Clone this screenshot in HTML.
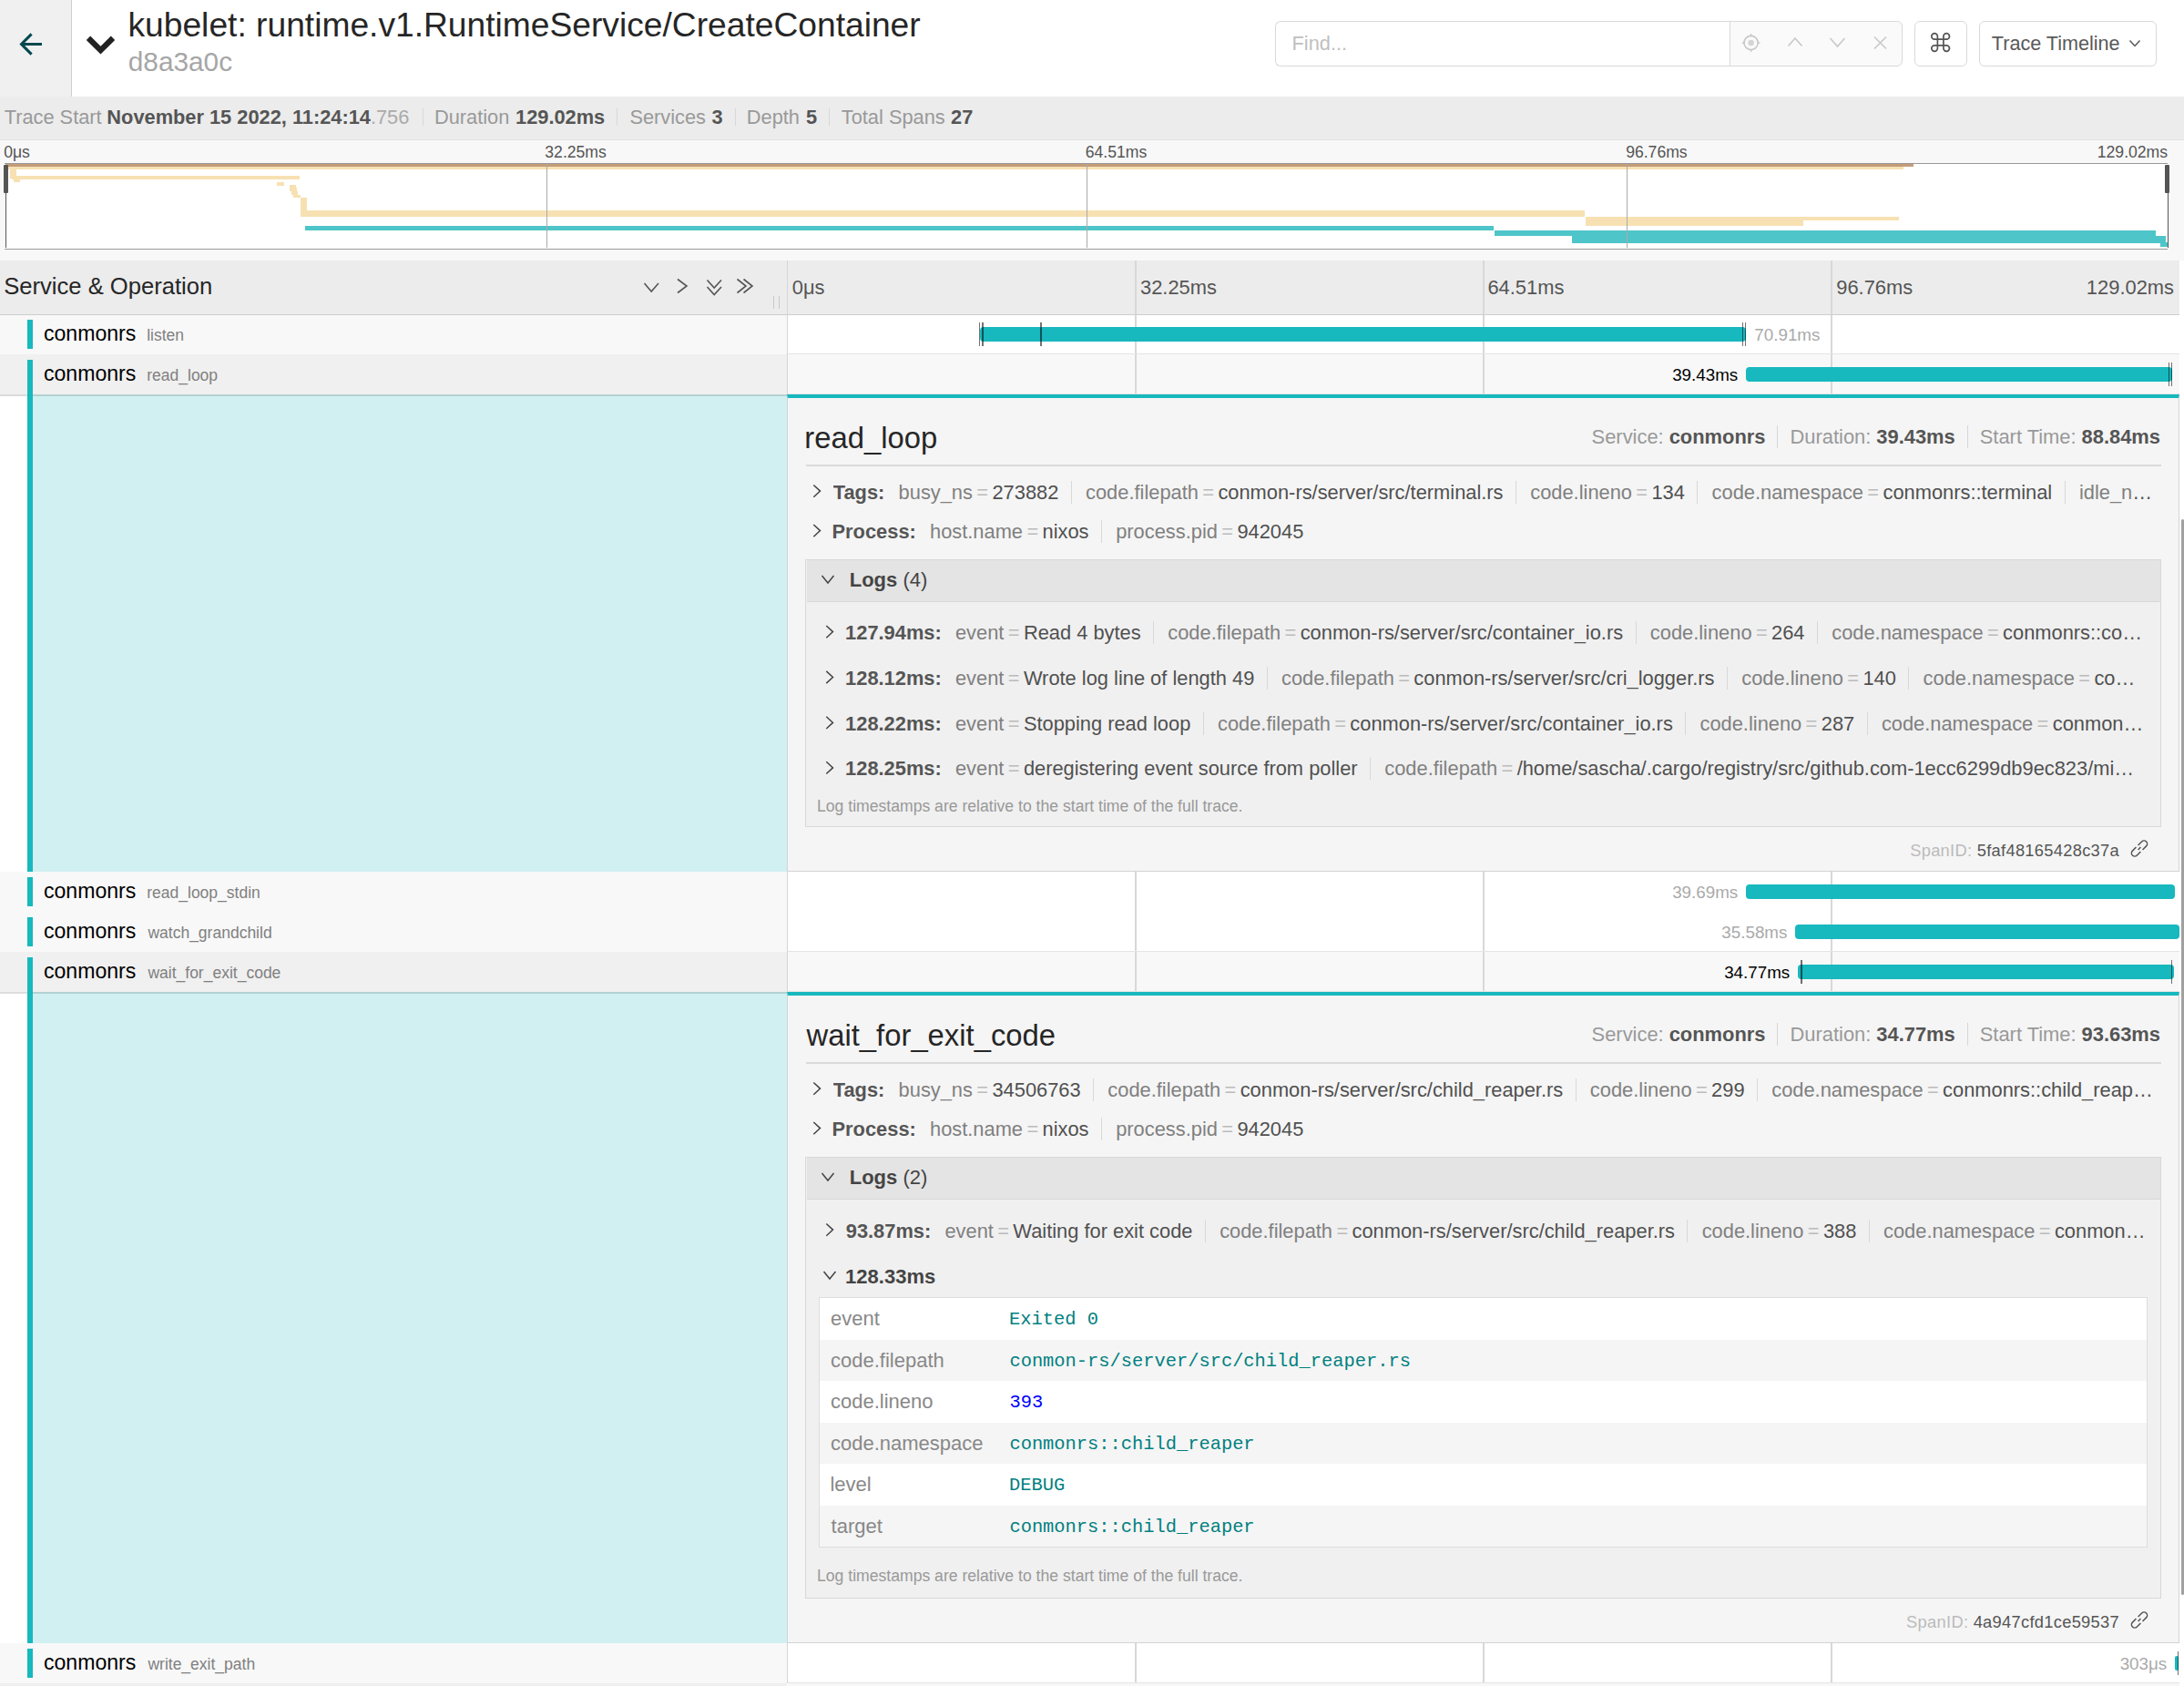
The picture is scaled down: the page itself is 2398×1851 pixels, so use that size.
<!DOCTYPE html><html><head><meta charset="utf-8"><style>
*{box-sizing:content-box}
html,body{margin:0;padding:0;width:2398px;height:1851px;overflow:hidden;background:#fff;font-family:'Liberation Sans',sans-serif}
.a{position:absolute}
.t{position:absolute;white-space:pre;line-height:normal}
.metab{display:flex;align-items:center;font-size:21.7px;white-space:pre;line-height:normal}
.metab .mi{padding-right:13px;margin-right:13px;border-right:1px solid #d6d6d6;color:#555}
.metab .mi.last{border-right:none}
.metab .ml{color:#999}
.metab b{color:#555}
.lh{white-space:pre;line-height:normal}
.lh .li{padding-right:13px;margin-right:13px;border-right:1px solid #d6d6d6}
.lh .li.last{border-right:none;padding-right:0;margin-right:0}
.lh .ll{color:#999;margin-right:6px}
.lh b{color:#555}
.kv{white-space:nowrap;overflow:hidden;text-overflow:ellipsis;font-size:21.85px;line-height:normal;color:#505050}
.kv b.kl{color:#555}
.kv ul{display:inline;list-style:none;margin:0;padding:0}
.kv li{display:inline;margin-left:15.2px;padding-right:13.5px;border-right:1px solid #d8d8d8}
.kv li:last-child{padding-right:0;border-right:none}
.kv .sk{color:#808080}
.kv .sd{color:#bbb;padding:0 0.2em}
</style></head><body><div class="a" style="left:0px;top:0px;width:2398px;height:106px;background:#fff;"></div>
<div class="a" style="left:0px;top:0px;width:78px;height:106px;background:#f0f0f0;border-right:1px solid #d0d0d0;"></div>
<svg class="a" style="left:0;top:0" width="78" height="106"><path d="M34.6 37.4 L23.5 48.5 L34.6 59.6 M23.5 48.5 H46" stroke="#00474e" stroke-width="3" fill="none"/></svg>
<svg class="a" style="left:90px;top:30px" width="40" height="35"><path d="M97 41.7 L110.5 55.2 L124 41.7" transform="translate(-90,-30)" stroke="#222" stroke-width="6.2" fill="none" stroke-linecap="butt"/></svg>
<div class="t" style="left:140.49px;top:6.00px;font-size:37.2px;color:#262626;font-family:'Liberation Sans',sans-serif;">kubelet: runtime.v1.RuntimeService/CreateContainer</div>
<div class="t" style="left:140.75px;top:50.80px;font-size:29.8px;color:#a6a6a6;font-family:'Liberation Sans',sans-serif;">d8a3a0c</div>
<div class="a" style="left:1400px;top:23px;width:499px;height:48px;border:1px solid #d9d9d9;border-right:none;border-radius:6px 0 0 6px;background:#fff"></div>
<div class="t" style="left:1418.51px;top:35.00px;font-size:21.8px;color:#bfbfbf;font-family:'Liberation Sans',sans-serif;">Find...</div>
<div class="a" style="left:1899px;top:23px;width:188px;height:48px;border:1px solid #d9d9d9;border-radius:0 6px 6px 0;background:#fafafa"></div>
<svg class="a" style="left:1900px;top:24px" width="188" height="48">
<g transform="translate(-1900,-24)" stroke="#c8c8c8" fill="none" stroke-width="1.6">
<circle cx="1922.6" cy="47" r="7.6"/><circle cx="1922.6" cy="47" r="3.3" fill="#d5d5d5" stroke="none"/>
<path d="M1922.6 37.2 v2.3 M1922.6 54.5 v2.3 M1912.8 47 h2.3 M1930.2 47 h2.3"/>
<path d="M1963.5 50.5 L1971 42 L1978.5 50.5"/>
<path d="M2009.5 42 L2017.5 51 L2025.5 42"/>
<path d="M2058 40.5 L2071 53.5 M2071 40.5 L2058 53.5"/>
</g></svg>
<div class="a" style="left:2102px;top:23px;width:56px;height:48px;border:1px solid #d9d9d9;border-radius:6px;background:#fff"></div>
<svg class="a" style="left:0;top:0;overflow:visible" width="1" height="1"><path d="M2127.4 53.1 V39.9 A3.3 3.3 0 1 0 2124.1 43.2 H2137.2 A3.3 3.3 0 1 0 2133.9 39.9 V53.1 A3.3 3.3 0 1 0 2137.2 49.8 H2124.1 A3.3 3.3 0 1 0 2127.4 53.1 Z" stroke="#555" stroke-width="1.7" fill="none"/></svg>
<div class="a" style="left:2173px;top:23px;width:193px;height:48px;border:1px solid #d9d9d9;border-radius:6px;background:#fff"></div>
<div class="t" style="left:2186.81px;top:35.20px;font-size:21.6px;color:#595959;font-family:'Liberation Sans',sans-serif;">Trace Timeline</div>
<svg class="a" style="left:2330px;top:38px" width="30" height="20"><path d="M8.5 6.5 L14 12.5 L19.5 6.5" stroke="#595959" stroke-width="1.5" fill="none"/></svg>
<div class="a" style="left:0px;top:106px;width:2398px;height:47px;background:#ececec;"></div>
<div class="a" style="left:0px;top:153px;width:2398px;height:1px;background:#e2e2e2;"></div>
<div class="t" style="left:4.66px;top:116.10px;font-size:21.8px;color:#999;font-family:'Liberation Sans',sans-serif;">Trace Start</div>
<div class="t" style="left:117.34px;top:116.10px;font-size:21.8px;color:#555;font-family:'Liberation Sans',sans-serif;font-weight:bold;">November 15 2022, 11:24:14<span style="color:#aaa;font-weight:normal">.756</span></div>
<div class="a" style="left:464.1px;top:119.3px;width:1.0px;height:19.000000000000014px;background:#d8d8d8;"></div>
<div class="a" style="left:677.4px;top:119.3px;width:1.0px;height:19.000000000000014px;background:#d8d8d8;"></div>
<div class="a" style="left:806.7px;top:119.3px;width:1.0px;height:19.000000000000014px;background:#d8d8d8;"></div>
<div class="a" style="left:910.1px;top:119.3px;width:1.0px;height:19.000000000000014px;background:#d8d8d8;"></div>
<div class="t" style="left:476.91px;top:116.10px;font-size:21.8px;color:#999;font-family:'Liberation Sans',sans-serif;">Duration</div>
<div class="t" style="left:566.03px;top:116.10px;font-size:21.8px;color:#555;font-family:'Liberation Sans',sans-serif;font-weight:bold;">129.02ms</div>
<div class="t" style="left:691.41px;top:116.10px;font-size:21.8px;color:#999;font-family:'Liberation Sans',sans-serif;">Services</div>
<div class="t" style="left:781.40px;top:116.10px;font-size:21.8px;color:#555;font-family:'Liberation Sans',sans-serif;font-weight:bold;">3</div>
<div class="t" style="left:819.81px;top:116.10px;font-size:21.8px;color:#999;font-family:'Liberation Sans',sans-serif;">Depth</div>
<div class="t" style="left:885.03px;top:116.10px;font-size:21.8px;color:#555;font-family:'Liberation Sans',sans-serif;font-weight:bold;">5</div>
<div class="t" style="left:923.81px;top:116.10px;font-size:21.8px;color:#999;font-family:'Liberation Sans',sans-serif;">Total Spans</div>
<div class="t" style="left:1044.04px;top:116.10px;font-size:21.8px;color:#555;font-family:'Liberation Sans',sans-serif;font-weight:bold;">27</div>
<div class="a" style="left:0px;top:154px;width:2398px;height:132px;background:#f8f8f8;"></div>
<div class="t" style="left:4.21px;top:157.00px;font-size:17.6px;color:#555;font-family:'Liberation Sans',sans-serif;">0μs</div>
<div class="t" style="left:598.33px;top:157.00px;font-size:17.6px;color:#555;font-family:'Liberation Sans',sans-serif;">32.25ms</div>
<div class="t" style="left:1191.71px;top:157.00px;font-size:17.6px;color:#555;font-family:'Liberation Sans',sans-serif;">64.51ms</div>
<div class="t" style="left:1785.17px;top:157.00px;font-size:17.6px;color:#555;font-family:'Liberation Sans',sans-serif;">96.76ms</div>
<div class="t" style="right:17.96px;top:157.00px;font-size:17.6px;color:#555;font-family:'Liberation Sans',sans-serif;">129.02ms</div>
<div class="a" style="left:5px;top:179px;width:2375px;height:93px;background:#fff;border-top:1px solid #999;border-bottom:1px solid #999;"></div>
<div class="a" style="left:6px;top:180px;width:2095px;height:2.5px;background:#c49c78;"></div>
<div class="a" style="left:6px;top:182.5px;width:2084px;height:3.5px;background:#f7e1b2;"></div>
<div class="a" style="left:10.5px;top:186px;width:7.5px;height:10px;background:#f7e1b2;"></div>
<div class="a" style="left:13px;top:193px;width:316px;height:3.5px;background:#f7e1b2;"></div>
<div class="a" style="left:15px;top:196px;width:7px;height:3.5px;background:#f7e1b2;"></div>
<div class="a" style="left:304px;top:199.5px;width:8px;height:4.0px;background:#f7e1b2;"></div>
<div class="a" style="left:318px;top:203px;width:7px;height:3px;background:#f7e1b2;"></div>
<div class="a" style="left:318px;top:206px;width:8px;height:4px;background:#f7e1b2;"></div>
<div class="a" style="left:320px;top:210px;width:7px;height:4px;background:#f7e1b2;"></div>
<div class="a" style="left:322px;top:214px;width:8px;height:3px;background:#f7e1b2;"></div>
<div class="a" style="left:330px;top:217px;width:7px;height:14px;background:#f7e1b2;"></div>
<div class="a" style="left:330px;top:231px;width:1410px;height:7px;background:#f7e1b2;"></div>
<div class="a" style="left:1741px;top:238px;width:239px;height:10px;background:#f7e1b2;"></div>
<div class="a" style="left:1980px;top:238px;width:105px;height:3.5px;background:#f7e1b2;"></div>
<div class="a" style="left:335px;top:248px;width:1305px;height:4.5px;background:#4ec5c9;"></div>
<div class="a" style="left:1641px;top:252.5px;width:726px;height:6.5px;background:#4ec5c9;"></div>
<div class="a" style="left:1726px;top:259px;width:652px;height:7.5px;background:#4ec5c9;"></div>
<div class="a" style="left:2372px;top:266px;width:8px;height:5px;background:#4ec5c9;"></div>
<div class="a" style="left:599.5px;top:180px;width:1.5px;height:92px;background:#aaa;"></div>
<div class="a" style="left:1192.5px;top:180px;width:1.5px;height:92px;background:#aaa;"></div>
<div class="a" style="left:1785.5px;top:180px;width:1.5px;height:92px;background:#aaa;"></div>
<div class="a" style="left:4px;top:181px;width:5px;height:31px;background:#555;border-radius:1px;"></div>
<div class="a" style="left:5.5px;top:181px;width:1.5px;height:91px;background:#555;"></div>
<div class="a" style="left:2377px;top:181px;width:5px;height:31px;background:#555;border-radius:1px;"></div>
<div class="a" style="left:2379.5px;top:181px;width:1.5px;height:91px;background:#555;"></div>
<div class="a" style="left:0px;top:286px;width:2393px;height:59px;background:#ececec;"></div>
<div class="a" style="left:0px;top:345px;width:2393px;height:1px;background:#cdcdcd;"></div>
<div class="t" style="left:4.24px;top:299.90px;font-size:25.6px;color:#262626;font-family:'Liberation Sans',sans-serif;">Service &amp; Operation</div>
<svg class="a" style="left:690px;top:290px" width="180" height="55"><g transform="translate(-690,-290)" stroke="#555" stroke-width="1.6" fill="none">
<path d="M707.5 311 L715.2 320 L723 311"/>
<path d="M744 306.5 L754 314 L744 321.5"/>
<path d="M776.5 307.5 L784.2 316 L792 307.5 M776.5 315 L784.2 323.5 L792 315"/>
<path d="M809.5 306.5 L819 314 L809.5 321.5 M816.5 306.5 L826 314 L816.5 321.5"/>
</g>
<path d="M159.5 35 v14 M165.5 35 v14" stroke="#c8c8c8" stroke-width="1" fill="none"/>
</svg>
<div class="a" style="left:864px;top:286px;width:1px;height:60px;background:#d6d6d6;"></div>
<div class="t" style="left:869.84px;top:303.00px;font-size:21.9px;color:#555;font-family:'Liberation Sans',sans-serif;">0μs</div>
<div class="t" style="left:1251.97px;top:303.00px;font-size:21.9px;color:#555;font-family:'Liberation Sans',sans-serif;">32.25ms</div>
<div class="t" style="left:1633.39px;top:303.00px;font-size:21.9px;color:#555;font-family:'Liberation Sans',sans-serif;">64.51ms</div>
<div class="t" style="left:2016.27px;top:303.00px;font-size:21.9px;color:#555;font-family:'Liberation Sans',sans-serif;">96.76ms</div>
<div class="t" style="right:11.01px;top:303.00px;font-size:21.9px;color:#555;font-family:'Liberation Sans',sans-serif;">129.02ms</div>
<div class="a" style="left:1246px;top:286px;width:2px;height:59px;background:#d8d8d8;"></div>
<div class="a" style="left:1628px;top:286px;width:2px;height:59px;background:#d8d8d8;"></div>
<div class="a" style="left:2010px;top:286px;width:2px;height:59px;background:#d8d8d8;"></div>
<div class="a" style="left:0px;top:345px;width:864px;height:44px;background:#f8f8f8;"></div>
<div class="a" style="left:865px;top:345px;width:1528px;height:44px;background:#fff;"></div>
<div class="a" style="left:865px;top:388px;width:1528px;height:1px;background:#e4e4e4;"></div>
<div class="a" style="left:864px;top:345px;width:1px;height:44px;background:#d6d6d6;"></div>
<div class="a" style="left:1246px;top:345px;width:2px;height:43px;background:#d8d8d8;"></div>
<div class="a" style="left:1628px;top:345px;width:2px;height:43px;background:#d8d8d8;"></div>
<div class="a" style="left:2010px;top:345px;width:2px;height:43px;background:#d8d8d8;"></div>
<div class="a" style="left:30px;top:351px;width:6px;height:32px;background:#17b8be;"></div>
<div class="t" style="left:47.92px;top:353.30px;font-size:23.1px;color:#000;font-family:'Liberation Sans',sans-serif;">conmonrs</div>
<div class="t" style="left:161.22px;top:358.30px;font-size:17.5px;color:#808080;font-family:'Liberation Sans',sans-serif;">listen</div>
<div class="a" style="left:1075.7px;top:359px;width:840.8999999999999px;height:16px;background:#17b8be;border-radius:4px;"></div>
<div class="a" style="left:1075px;top:354px;width:1px;height:26px;background:rgba(0,0,0,0.55);"></div>
<div class="a" style="left:1078px;top:354px;width:2px;height:26px;background:rgba(0,0,0,0.55);"></div>
<div class="a" style="left:1142px;top:354px;width:2px;height:26px;background:rgba(0,0,0,0.55);"></div>
<div class="a" style="left:1913px;top:354px;width:1px;height:26px;background:rgba(0,0,0,0.55);"></div>
<div class="a" style="left:1916px;top:354px;width:1px;height:26px;background:rgba(0,0,0,0.55);"></div>
<div class="t" style="left:1926.34px;top:357.00px;font-size:18.8px;color:#aaa;font-family:'Liberation Sans',sans-serif;">70.91ms</div>
<div class="a" style="left:0px;top:389px;width:864px;height:44px;background:#f0f0f0;"></div>
<div class="a" style="left:865px;top:389px;width:1528px;height:44px;background:#f8f8f8;"></div>
<div class="a" style="left:865px;top:432px;width:1528px;height:1px;background:#e4e4e4;"></div>
<div class="a" style="left:864px;top:389px;width:1px;height:44px;background:#d6d6d6;"></div>
<div class="a" style="left:1246px;top:389px;width:2px;height:43px;background:#d8d8d8;"></div>
<div class="a" style="left:1628px;top:389px;width:2px;height:43px;background:#d8d8d8;"></div>
<div class="a" style="left:2010px;top:389px;width:2px;height:43px;background:#d8d8d8;"></div>
<div class="a" style="left:30px;top:395px;width:6px;height:38px;background:#17b8be;"></div>
<div class="t" style="left:47.92px;top:397.30px;font-size:23.1px;color:#000;font-family:'Liberation Sans',sans-serif;">conmonrs</div>
<div class="t" style="left:161.24px;top:402.30px;font-size:17.5px;color:#808080;font-family:'Liberation Sans',sans-serif;">read_loop</div>
<div class="a" style="left:1917px;top:403px;width:468px;height:16px;background:#17b8be;border-radius:4px;"></div>
<div class="a" style="left:2381px;top:398px;width:1px;height:26px;background:rgba(0,0,0,0.55);"></div>
<div class="a" style="left:2384px;top:398px;width:1px;height:26px;background:rgba(0,0,0,0.55);"></div>
<div class="t" style="right:489.82px;top:401.00px;font-size:18.8px;color:#000;font-family:'Liberation Sans',sans-serif;">39.43ms</div>
<div class="a" style="left:0px;top:957px;width:864px;height:44px;background:#f8f8f8;"></div>
<div class="a" style="left:865px;top:957px;width:1528px;height:44px;background:#fff;"></div>
<div class="a" style="left:864px;top:957px;width:1px;height:44px;background:#d6d6d6;"></div>
<div class="a" style="left:1246px;top:957px;width:2px;height:44px;background:#d8d8d8;"></div>
<div class="a" style="left:1628px;top:957px;width:2px;height:44px;background:#d8d8d8;"></div>
<div class="a" style="left:2010px;top:957px;width:2px;height:44px;background:#d8d8d8;"></div>
<div class="a" style="left:30px;top:963px;width:6px;height:32px;background:#17b8be;"></div>
<div class="t" style="left:47.92px;top:965.30px;font-size:23.1px;color:#000;font-family:'Liberation Sans',sans-serif;">conmonrs</div>
<div class="t" style="left:161.24px;top:970.30px;font-size:17.5px;color:#808080;font-family:'Liberation Sans',sans-serif;">read_loop_stdin</div>
<div class="a" style="left:1917px;top:971px;width:471px;height:16px;background:#17b8be;border-radius:4px;"></div>
<div class="t" style="right:489.82px;top:969.00px;font-size:18.8px;color:#aaa;font-family:'Liberation Sans',sans-serif;">39.69ms</div>
<div class="a" style="left:0px;top:1001px;width:864px;height:44px;background:#f8f8f8;"></div>
<div class="a" style="left:865px;top:1001px;width:1528px;height:44px;background:#fff;"></div>
<div class="a" style="left:865px;top:1044px;width:1528px;height:1px;background:#e4e4e4;"></div>
<div class="a" style="left:864px;top:1001px;width:1px;height:44px;background:#d6d6d6;"></div>
<div class="a" style="left:1246px;top:1001px;width:2px;height:43px;background:#d8d8d8;"></div>
<div class="a" style="left:1628px;top:1001px;width:2px;height:43px;background:#d8d8d8;"></div>
<div class="a" style="left:2010px;top:1001px;width:2px;height:43px;background:#d8d8d8;"></div>
<div class="a" style="left:30px;top:1007px;width:6px;height:32px;background:#17b8be;"></div>
<div class="t" style="left:47.92px;top:1009.30px;font-size:23.1px;color:#000;font-family:'Liberation Sans',sans-serif;">conmonrs</div>
<div class="t" style="left:162.43px;top:1014.30px;font-size:17.5px;color:#808080;font-family:'Liberation Sans',sans-serif;">watch_grandchild</div>
<div class="a" style="left:1971.2px;top:1015px;width:421.79999999999995px;height:16px;background:#17b8be;border-radius:4px;"></div>
<div class="t" style="right:435.62px;top:1013.00px;font-size:18.8px;color:#aaa;font-family:'Liberation Sans',sans-serif;">35.58ms</div>
<div class="a" style="left:0px;top:1045px;width:864px;height:44px;background:#f0f0f0;"></div>
<div class="a" style="left:865px;top:1045px;width:1528px;height:44px;background:#f8f8f8;"></div>
<div class="a" style="left:865px;top:1088px;width:1528px;height:1px;background:#e4e4e4;"></div>
<div class="a" style="left:864px;top:1045px;width:1px;height:44px;background:#d6d6d6;"></div>
<div class="a" style="left:1246px;top:1045px;width:2px;height:43px;background:#d8d8d8;"></div>
<div class="a" style="left:1628px;top:1045px;width:2px;height:43px;background:#d8d8d8;"></div>
<div class="a" style="left:2010px;top:1045px;width:2px;height:43px;background:#d8d8d8;"></div>
<div class="a" style="left:30px;top:1051px;width:6px;height:38px;background:#17b8be;"></div>
<div class="t" style="left:47.92px;top:1053.30px;font-size:23.1px;color:#000;font-family:'Liberation Sans',sans-serif;">conmonrs</div>
<div class="t" style="left:162.43px;top:1058.30px;font-size:17.5px;color:#808080;font-family:'Liberation Sans',sans-serif;">wait_for_exit_code</div>
<div class="a" style="left:1974px;top:1059px;width:413px;height:16px;background:#17b8be;border-radius:4px;"></div>
<div class="a" style="left:1977px;top:1054px;width:2px;height:26px;background:rgba(0,0,0,0.55);"></div>
<div class="a" style="left:2384px;top:1054px;width:1px;height:26px;background:rgba(0,0,0,0.55);"></div>
<div class="t" style="right:432.82px;top:1057.00px;font-size:18.8px;color:#000;font-family:'Liberation Sans',sans-serif;">34.77ms</div>
<div class="a" style="left:0px;top:1804px;width:864px;height:44px;background:#f8f8f8;"></div>
<div class="a" style="left:865px;top:1804px;width:1528px;height:44px;background:#fff;"></div>
<div class="a" style="left:865px;top:1847px;width:1528px;height:1px;background:#e4e4e4;"></div>
<div class="a" style="left:864px;top:1804px;width:1px;height:44px;background:#d6d6d6;"></div>
<div class="a" style="left:1246px;top:1804px;width:2px;height:43px;background:#d8d8d8;"></div>
<div class="a" style="left:1628px;top:1804px;width:2px;height:43px;background:#d8d8d8;"></div>
<div class="a" style="left:2010px;top:1804px;width:2px;height:43px;background:#d8d8d8;"></div>
<div class="a" style="left:30px;top:1810px;width:6px;height:32px;background:#17b8be;"></div>
<div class="t" style="left:47.92px;top:1812.30px;font-size:23.1px;color:#000;font-family:'Liberation Sans',sans-serif;">conmonrs</div>
<div class="t" style="left:162.43px;top:1817.30px;font-size:17.5px;color:#808080;font-family:'Liberation Sans',sans-serif;">write_exit_path</div>
<div class="a" style="left:2388px;top:1818px;width:4px;height:16px;background:#17b8be;border-radius:4px;"></div>
<div class="a" style="left:2391px;top:1813px;width:1px;height:26px;background:rgba(0,0,0,0.55);"></div>
<div class="t" style="right:18.82px;top:1816.00px;font-size:18.8px;color:#aaa;font-family:'Liberation Sans',sans-serif;">303μs</div>
<div class="a" style="left:0px;top:1848px;width:864px;height:3px;background:#efefef;"></div>
<div class="a" style="left:865px;top:1848px;width:1528px;height:3px;background:#f7f7f7;"></div>
<div class="a" style="left:0px;top:433px;width:30px;height:524px;background:#fff;"></div>
<div class="a" style="left:30px;top:433px;width:6px;height:524px;background:#17b8be;"></div>
<div class="a" style="left:36px;top:433px;width:828px;height:524px;background:#d0f0f1;"></div>
<div class="a" style="left:0px;top:433px;width:30px;height:1.5px;background:#dcdcdc;"></div>
<div class="a" style="left:36px;top:433px;width:828px;height:1.5px;background:rgba(0,0,0,0.13);"></div>
<div class="a" style="left:864px;top:433px;width:1527px;height:519px;background:#f5f5f5;border:1px solid #d3d3d3;border-top:4px solid #17b8be;"></div>
<div class="t" style="left:883.32px;top:462.00px;font-size:32.8px;color:#262626;font-family:'Liberation Sans',sans-serif;">read_loop</div>
<div class="a lh" style="right:26.00px;top:467.00px;font-size:21.9px"><span class="li"><span class="ll">Service:</span><b>conmonrs</b></span><span class="li"><span class="ll">Duration:</span><b>39.43ms</b></span><span class="li last"><span class="ll">Start Time:</span><b>88.84ms</b></span></div>
<div class="a" style="left:884.5px;top:510.2px;width:1488.5px;height:1.8000000000000114px;background:#dadada;"></div>
<svg class="a" style="left:0;top:0;overflow:visible" width="1" height="1"><path d="M893.3 532.5 L900.5 539.1 L893.3 545.7" stroke="#444" stroke-width="1.5" fill="none"/></svg>
<div class="a kv" style="left:914.75px;top:527.70px;width:1456.25px"><b class="kl">Tags:</b><ul><li><span class="sk">busy_ns</span><span class="sd">=</span>273882</li><li><span class="sk">code.filepath</span><span class="sd">=</span>conmon-rs/server/src/terminal.rs</li><li><span class="sk">code.lineno</span><span class="sd">=</span>134</li><li><span class="sk">code.namespace</span><span class="sd">=</span>conmonrs::terminal</li><li><span class="sk">idle_ns</span><span class="sd">=</span>39150925</li><li><span class="sk">thread.id</span><span class="sd">=</span>1</li></ul></div>
<svg class="a" style="left:0;top:0;overflow:visible" width="1" height="1"><path d="M893.3 576 L900.5 582.6 L893.3 589.2" stroke="#444" stroke-width="1.5" fill="none"/></svg>
<div class="a kv" style="left:913.54px;top:571.00px;width:1457.46px"><b class="kl">Process:</b><ul><li><span class="sk">host.name</span><span class="sd">=</span>nixos</li><li><span class="sk">process.pid</span><span class="sd">=</span>942045</li></ul></div>
<div class="a" style="left:884px;top:613.5px;width:1487px;height:292.79999999999995px;border:1px solid #d8d8d8;background:#f0f0f0"></div>
<div class="a" style="left:886px;top:615.0px;width:1485.5px;height:45.0px;background:#e4e4e4;"></div>
<div class="a" style="left:886px;top:660.0px;width:1485.5px;height:1.0px;background:#d8d8d8;"></div>
<svg class="a" style="left:0;top:0;overflow:visible" width="1" height="1"><path d="M902.5 632.0 L909.0 640.0 L915.5 632.0" stroke="#444" stroke-width="1.5" fill="none"/></svg>
<div class="t" style="left:932.73px;top:623.80px;font-size:22px;color:#444;font-family:'Liberation Sans',sans-serif;"><b>Logs</b> (4)</div>
<svg class="a" style="left:0;top:0;overflow:visible" width="1" height="1"><path d="M907.3 687.0 L914.5 693.6 L907.3 700.2" stroke="#444" stroke-width="1.5" fill="none"/></svg>
<div class="a kv" style="left:928.12px;top:682.00px;width:1426.88px"><b class="kl">127.94ms:</b><ul><li><span class="sk">event</span><span class="sd">=</span>Read 4 bytes</li><li><span class="sk">code.filepath</span><span class="sd">=</span>conmon-rs/server/src/container_io.rs</li><li><span class="sk">code.lineno</span><span class="sd">=</span>264</li><li><span class="sk">code.namespace</span><span class="sd">=</span>conmonrs::container_io</li><li><span class="sk">level</span><span class="sd">=</span>DEBUG</li></ul></div>
<svg class="a" style="left:0;top:0;overflow:visible" width="1" height="1"><path d="M907.3 736.9 L914.5 743.5 L907.3 750.1" stroke="#444" stroke-width="1.5" fill="none"/></svg>
<div class="a kv" style="left:928.12px;top:731.90px;width:1426.88px"><b class="kl">128.12ms:</b><ul><li><span class="sk">event</span><span class="sd">=</span>Wrote log line of length 49</li><li><span class="sk">code.filepath</span><span class="sd">=</span>conmon-rs/server/src/cri_logger.rs</li><li><span class="sk">code.lineno</span><span class="sd">=</span>140</li><li><span class="sk">code.namespace</span><span class="sd">=</span>conmonrs::cri_logger</li><li><span class="sk">level</span><span class="sd">=</span>DEBUG</li></ul></div>
<svg class="a" style="left:0;top:0;overflow:visible" width="1" height="1"><path d="M907.3 786.8 L914.5 793.4 L907.3 800.0" stroke="#444" stroke-width="1.5" fill="none"/></svg>
<div class="a kv" style="left:928.12px;top:781.80px;width:1426.88px"><b class="kl">128.22ms:</b><ul><li><span class="sk">event</span><span class="sd">=</span>Stopping read loop</li><li><span class="sk">code.filepath</span><span class="sd">=</span>conmon-rs/server/src/container_io.rs</li><li><span class="sk">code.lineno</span><span class="sd">=</span>287</li><li><span class="sk">code.namespace</span><span class="sd">=</span>conmonrs::container_io</li><li><span class="sk">level</span><span class="sd">=</span>DEBUG</li></ul></div>
<svg class="a" style="left:0;top:0;overflow:visible" width="1" height="1"><path d="M907.3 836.3 L914.5 842.9 L907.3 849.5" stroke="#444" stroke-width="1.5" fill="none"/></svg>
<div class="a kv" style="left:928.12px;top:831.30px;width:1426.88px"><b class="kl">128.25ms:</b><ul><li><span class="sk">event</span><span class="sd">=</span>deregistering event source from poller</li><li><span class="sk">code.filepath</span><span class="sd">=</span>/home/sascha/.cargo/registry/src/github.com-1ecc6299db9ec823/mio-0.8.5/src/poll.rs</li><li><span class="sk">code.lineno</span><span class="sd">=</span>663</li></ul></div>
<div class="t" style="left:897.06px;top:874.80px;font-size:17.6px;color:#999;font-family:'Liberation Sans',sans-serif;">Log timestamps are relative to the start time of the full trace.</div>
<div class="a" style="right:71.00px;top:923.00px;font-size:18.3px;line-height:normal;white-space:pre;letter-spacing:0.3px"><span style="color:#bbb">SpanID: </span><span style="color:#555">5faf48165428c37a</span></div>
<svg class="a" style="left:0;top:0;overflow:visible" width="1" height="1"><g transform="translate(2349,931.5) rotate(-45)" stroke="#555" stroke-width="1.5" fill="none"><path d="M-1.5 -3.5 H-7.2 A3.5 3.5 0 0 0 -7.2 3.5 H-1.5 M1.5 -3.5 H7.2 A3.5 3.5 0 0 1 7.2 3.5 H1.5 M-2 0 H2"/></g></svg>
<div class="a" style="left:0px;top:1089px;width:30px;height:715px;background:#fff;"></div>
<div class="a" style="left:30px;top:1089px;width:6px;height:715px;background:#17b8be;"></div>
<div class="a" style="left:36px;top:1089px;width:828px;height:715px;background:#d0f0f1;"></div>
<div class="a" style="left:0px;top:1089px;width:30px;height:1.5px;background:#dcdcdc;"></div>
<div class="a" style="left:36px;top:1089px;width:828px;height:1.5px;background:rgba(0,0,0,0.13);"></div>
<div class="a" style="left:864px;top:1089px;width:1527px;height:710px;background:#f5f5f5;border:1px solid #d3d3d3;border-top:4px solid #17b8be;"></div>
<div class="t" style="left:885.55px;top:1118.00px;font-size:32.8px;color:#262626;font-family:'Liberation Sans',sans-serif;">wait_for_exit_code</div>
<div class="a lh" style="right:26.00px;top:1123.00px;font-size:21.9px"><span class="li"><span class="ll">Service:</span><b>conmonrs</b></span><span class="li"><span class="ll">Duration:</span><b>34.77ms</b></span><span class="li last"><span class="ll">Start Time:</span><b>93.63ms</b></span></div>
<div class="a" style="left:884.5px;top:1166.2px;width:1488.5px;height:1.7999999999999545px;background:#dadada;"></div>
<svg class="a" style="left:0;top:0;overflow:visible" width="1" height="1"><path d="M893.3 1188.5 L900.5 1195.1 L893.3 1201.7" stroke="#444" stroke-width="1.5" fill="none"/></svg>
<div class="a kv" style="left:914.75px;top:1183.70px;width:1456.25px"><b class="kl">Tags:</b><ul><li><span class="sk">busy_ns</span><span class="sd">=</span>34506763</li><li><span class="sk">code.filepath</span><span class="sd">=</span>conmon-rs/server/src/child_reaper.rs</li><li><span class="sk">code.lineno</span><span class="sd">=</span>299</li><li><span class="sk">code.namespace</span><span class="sd">=</span>conmonrs::child_reaper</li><li><span class="sk">idle_ns</span><span class="sd">=</span>263452</li><li><span class="sk">thread.id</span><span class="sd">=</span>1</li></ul></div>
<svg class="a" style="left:0;top:0;overflow:visible" width="1" height="1"><path d="M893.3 1232 L900.5 1238.6 L893.3 1245.2" stroke="#444" stroke-width="1.5" fill="none"/></svg>
<div class="a kv" style="left:913.54px;top:1227.00px;width:1457.46px"><b class="kl">Process:</b><ul><li><span class="sk">host.name</span><span class="sd">=</span>nixos</li><li><span class="sk">process.pid</span><span class="sd">=</span>942045</li></ul></div>
<div class="a" style="left:884px;top:1269.5px;width:1487px;height:483.0px;border:1px solid #d8d8d8;background:#f0f0f0"></div>
<div class="a" style="left:886px;top:1271.0px;width:1485.5px;height:45.0px;background:#e4e4e4;"></div>
<div class="a" style="left:886px;top:1316.0px;width:1485.5px;height:1.0px;background:#d8d8d8;"></div>
<svg class="a" style="left:0;top:0;overflow:visible" width="1" height="1"><path d="M902.5 1288.0 L909.0 1296.0 L915.5 1288.0" stroke="#444" stroke-width="1.5" fill="none"/></svg>
<div class="t" style="left:932.73px;top:1279.80px;font-size:22px;color:#444;font-family:'Liberation Sans',sans-serif;"><b>Logs</b> (2)</div>
<svg class="a" style="left:0;top:0;overflow:visible" width="1" height="1"><path d="M907.3 1343.5 L914.5 1350.1 L907.3 1356.7" stroke="#444" stroke-width="1.5" fill="none"/></svg>
<div class="a kv" style="left:928.74px;top:1338.50px;width:1429.26px"><b class="kl">93.87ms:</b><ul><li><span class="sk">event</span><span class="sd">=</span>Waiting for exit code</li><li><span class="sk">code.filepath</span><span class="sd">=</span>conmon-rs/server/src/child_reaper.rs</li><li><span class="sk">code.lineno</span><span class="sd">=</span>388</li><li><span class="sk">code.namespace</span><span class="sd">=</span>conmonrs::child_reaper</li><li><span class="sk">level</span><span class="sd">=</span>DEBUG</li></ul></div>
<svg class="a" style="left:0;top:0;overflow:visible" width="1" height="1"><path d="M904.5 1396.0 L911.0 1404.0 L917.5 1396.0" stroke="#444" stroke-width="1.5" fill="none"/></svg>
<div class="t" style="left:928.11px;top:1388.50px;font-size:22px;color:#444;font-family:'Liberation Sans',sans-serif;font-weight:bold;">128.33ms</div>
<div class="a" style="left:898.6px;top:1424.0px;width:1457.60px;height:273.30px;border:1px solid #ddd;background:#fff"></div>
<div class="t" style="left:911.97px;top:1435.20px;font-size:22px;color:#888;font-family:'Liberation Sans',sans-serif;">event</div>
<div class="t" style="left:1108.09px;top:1437.20px;font-size:20.4px;color:#008080;font-family:'Liberation Mono',monospace;">Exited 0</div>
<div class="a" style="left:899.6px;top:1470.55px;width:1457.6px;height:45.549999999999955px;background:#f5f5f5;"></div>
<div class="t" style="left:911.97px;top:1480.75px;font-size:22px;color:#888;font-family:'Liberation Sans',sans-serif;">code.filepath</div>
<div class="t" style="left:1108.41px;top:1482.75px;font-size:20.4px;color:#008080;font-family:'Liberation Mono',monospace;">conmon-rs/server/src/child_reaper.rs</div>
<div class="t" style="left:911.97px;top:1526.30px;font-size:22px;color:#888;font-family:'Liberation Sans',sans-serif;">code.lineno</div>
<div class="t" style="left:1108.42px;top:1528.30px;font-size:20.4px;color:#0000ff;font-family:'Liberation Mono',monospace;">393</div>
<div class="a" style="left:899.6px;top:1561.65px;width:1457.6px;height:45.549999999999955px;background:#f5f5f5;"></div>
<div class="t" style="left:911.97px;top:1571.85px;font-size:22px;color:#888;font-family:'Liberation Sans',sans-serif;">code.namespace</div>
<div class="t" style="left:1108.41px;top:1573.85px;font-size:20.4px;color:#008080;font-family:'Liberation Mono',monospace;">conmonrs::child_reaper</div>
<div class="t" style="left:911.42px;top:1617.40px;font-size:22px;color:#888;font-family:'Liberation Sans',sans-serif;">level</div>
<div class="t" style="left:1108.09px;top:1619.40px;font-size:20.4px;color:#008080;font-family:'Liberation Mono',monospace;">DEBUG</div>
<div class="a" style="left:899.6px;top:1652.75px;width:1457.6px;height:45.549999999999955px;background:#f5f5f5;"></div>
<div class="t" style="left:912.57px;top:1662.95px;font-size:22px;color:#888;font-family:'Liberation Sans',sans-serif;">target</div>
<div class="t" style="left:1108.41px;top:1664.95px;font-size:20.4px;color:#008080;font-family:'Liberation Mono',monospace;">conmonrs::child_reaper</div>
<div class="t" style="left:897.06px;top:1720.00px;font-size:17.6px;color:#999;font-family:'Liberation Sans',sans-serif;">Log timestamps are relative to the start time of the full trace.</div>
<div class="a" style="right:71.00px;top:1770.00px;font-size:18.3px;line-height:normal;white-space:pre;letter-spacing:0.3px"><span style="color:#bbb">SpanID: </span><span style="color:#555">4a947cfd1ce59537</span></div>
<svg class="a" style="left:0;top:0;overflow:visible" width="1" height="1"><g transform="translate(2349,1778.5) rotate(-45)" stroke="#555" stroke-width="1.5" fill="none"><path d="M-1.5 -3.5 H-7.2 A3.5 3.5 0 0 0 -7.2 3.5 H-1.5 M1.5 -3.5 H7.2 A3.5 3.5 0 0 1 7.2 3.5 H1.5 M-2 0 H2"/></g></svg>
<div class="a" style="left:0px;top:345px;width:2393px;height:1px;background:#cdcdcd;"></div>
<div class="a" style="left:2395px;top:570px;width:3px;height:1181px;background:#a0a0a0;border-radius:2px;"></div></body></html>
